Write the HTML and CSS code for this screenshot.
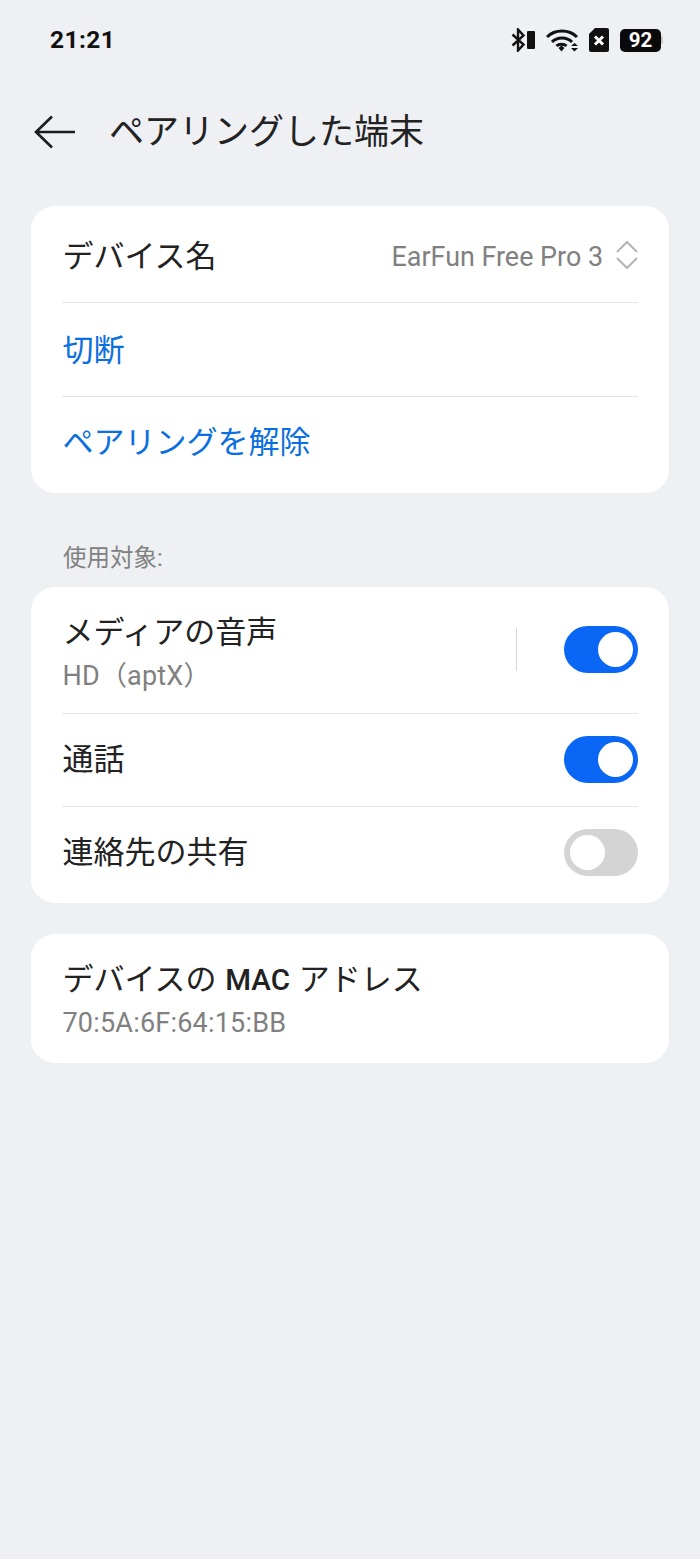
FILE: index.html
```html
<!DOCTYPE html>
<html lang="ja">
<head>
<meta charset="utf-8">
<title>ペアリングした端末</title>
<link rel="stylesheet" href="styles.css">
</head>
<body>
<div class="status">
  <span class="time">21:21</span>
  <div class="status-icons">
    <svg width="24" height="24" viewBox="0 0 24 24"><path d="M1.500 6.500 L12.500 16.500 L7 22.500 V1.500 L12.500 7.500 L1.500 17.500" fill="none" stroke="#111" stroke-width="2.400"/><rect x="16" y="3" width="8" height="18" rx="1" fill="#111"/></svg>
    <svg width="32" height="24" viewBox="0 0 32 24"><g fill="none" stroke="#111" stroke-width="3"><path d="M1 9 C9 1 23 1 31 9"/><path d="M6 14 C11 8.500 21 8.500 26 14"/><path d="M10.500 18 C13 15.500 18 15.500 20.500 18"/></g><path d="M12.500 20 L15.500 17.500 L18.500 20 L15.500 23.500Z" fill="#111"/><path d="M25 18 H32 L28.500 15Z M25 20 H32 L28.500 23.500Z" fill="#111"/></svg>
    <svg width="20" height="24" viewBox="0 0 20 24"><path d="M6 0 H18 a2 2 0 0 1 2 2 V22 a2 2 0 0 1 -2 2 H2 a2 2 0 0 1 -2 -2 V6Z" fill="#111"/><path d="M6 8.500 L14 16.500 M14 8.500 L6 16.500" stroke="#fff" stroke-width="3"/></svg>
    <div class="battery-wrap"><div class="battery"><span class="battery-num">92</span></div><span class="battery-tip"></span></div>
  </div>
</div>

<header class="topbar">
  <svg class="back" width="42" height="36" viewBox="0 0 42 36"><path d="M18 2.500 L2 18 L18 33.500 M2 18 H41" fill="none" stroke="#1c1c1c" stroke-width="2.600"/></svg>
  <h1 class="title">ペアリングした端末</h1>
</header>

<main class="content">
  <section class="card card-device">
    <div class="row row-name">
      <span class="label">デバイス名</span>
      <span class="value">EarFun Free Pro 3</span>
      <svg class="updown" width="24" height="32" viewBox="0 0 24 32"><path d="M2 13 L12 3 L22 13 M2 19 L12 29 L22 19" fill="none" stroke="#b4b4b4" stroke-width="2"/></svg>
    </div>
    <div class="row row-link"><span class="link">切断</span></div>
    <div class="row row-link row-last"><span class="link">ペアリングを解除</span></div>
  </section>

  <p class="section-label">使用対象:</p>

  <section class="card card-use">
    <div class="row row-media">
      <div class="two-line">
        <span class="label">メディアの音声</span>
        <span class="sub">HD（aptX）</span>
      </div>
      <span class="vline"></span>
      <span class="toggle on"></span>
    </div>
    <div class="row row-use"><span class="label">通話</span><span class="toggle on"></span></div>
    <div class="row row-use row-last"><span class="label">連絡先の共有</span><span class="toggle off"></span></div>
  </section>

  <section class="card card-mac">
    <div class="two-line">
      <span class="label label-mac">デバイスの <span class="mac">MAC</span> アドレス</span>
      <span class="sub">70:5A:6F:64:15:BB</span>
    </div>
  </section>
</main>
</body>
</html>
```

FILE: styles.css
```css
* { box-sizing: border-box; }
html, body { margin: 0; padding: 0; }
body {
  width: 700px;
  height: 1559px;
  background: #eef0f3;
  font-family: Roboto, "Noto Sans CJK JP", sans-serif;
  color: #1f1f1f;
  overflow: hidden;
}
.status {
  height: 80px;
  padding: 0 37px 0 50px;
  display: flex;
  align-items: center;
  justify-content: space-between;
}
.time { font-size: 24.500px; font-weight: 700; letter-spacing: 0.4px; color: #111; padding-bottom: 2px; }
.status-icons { display: flex; align-items: center; gap: 11px; }
.battery-wrap { display: flex; align-items: center; }
.battery {
  width: 41px;
  height: 23px;
  background: #0a0a0a;
  border-radius: 5px;
  display: flex;
  align-items: center;
  justify-content: center;
}
.battery-num { color: #fff; font-size: 20.500px; font-weight: 700; line-height: 1; }
.battery-tip { width: 2px; height: 8px; background: #c4c4c4; border-radius: 0 2px 2px 0; }
.topbar {
  height: 104px;
  padding: 0 0 0 34px;
  display: flex;
  align-items: center;
}
.back { margin-right: 33px; flex: none; }
.title { margin: 0; font-size: 35px; font-weight: 400; color: #222; line-height: 1; }
.content { padding: 22px 31px 0; }
.card { background: #fff; border-radius: 24px; padding: 0 31px; }
.card-device { height: 287px; }
.row {
  display: flex;
  align-items: center;
  border-bottom: 1px solid #e4e4e6;
}
.row-last { border-bottom: 0; }
.row-name { height: 97px; padding-top: 6px; }
.row-link { height: 94px; padding-bottom: 5px; }
.row-last.row-link { height: 92px; padding-bottom: 7px; }
.label { font-size: 31px; line-height: 40px; color: #222; margin-left: 0.500px; }
.value { margin-left: auto; font-size: 26.900px; color: #808080; }
.updown { margin: -4px -1px 0 12px; flex: none; }
.link { font-size: 31px; color: #0a6fe0; margin-left: 0.500px; }
.section-label { margin: 50px 0 14px 32px; font-size: 23.500px; line-height: 30px; color: #808080; }
.card-use { height: 316px; }
.row-media { height: 127px; padding-bottom: 2px; }
.two-line { display: flex; flex-direction: column; gap: 6px; }
.row-media .two-line { margin-top: 7px; }
.sub { font-size: 27px; line-height: 34px; color: #808080; letter-spacing: 0.2px; margin-left: 0.500px; }
.vline { width: 1px; height: 43px; background: #d6d6d6; margin-left: auto; margin-right: 47px; }
.row-use { height: 93px; justify-content: space-between; padding-bottom: 2px; }
.row-use .label { padding-top: 2px; }
.row-use.row-last { padding-bottom: 3px; }
.toggle { position: relative; display: block; width: 74px; height: 47px; border-radius: 24px; flex: none; }
.toggle::after {
  content: "";
  position: absolute;
  top: 6px;
  width: 35px;
  height: 35px;
  border-radius: 50%;
  background: #fff;
}
.toggle.on { background: #0a66f5; }
.toggle.on::after { right: 5px; }
.toggle.off { background: #d4d4d4; }
.toggle.off::after { left: 6px; }
.card-mac { margin-top: 31px; height: 129px; display: flex; align-items: center; padding-top: 3px; }
.label-mac { word-spacing: 1px; }
.mac { font-weight: 500; font-size: 29.500px; }
```
